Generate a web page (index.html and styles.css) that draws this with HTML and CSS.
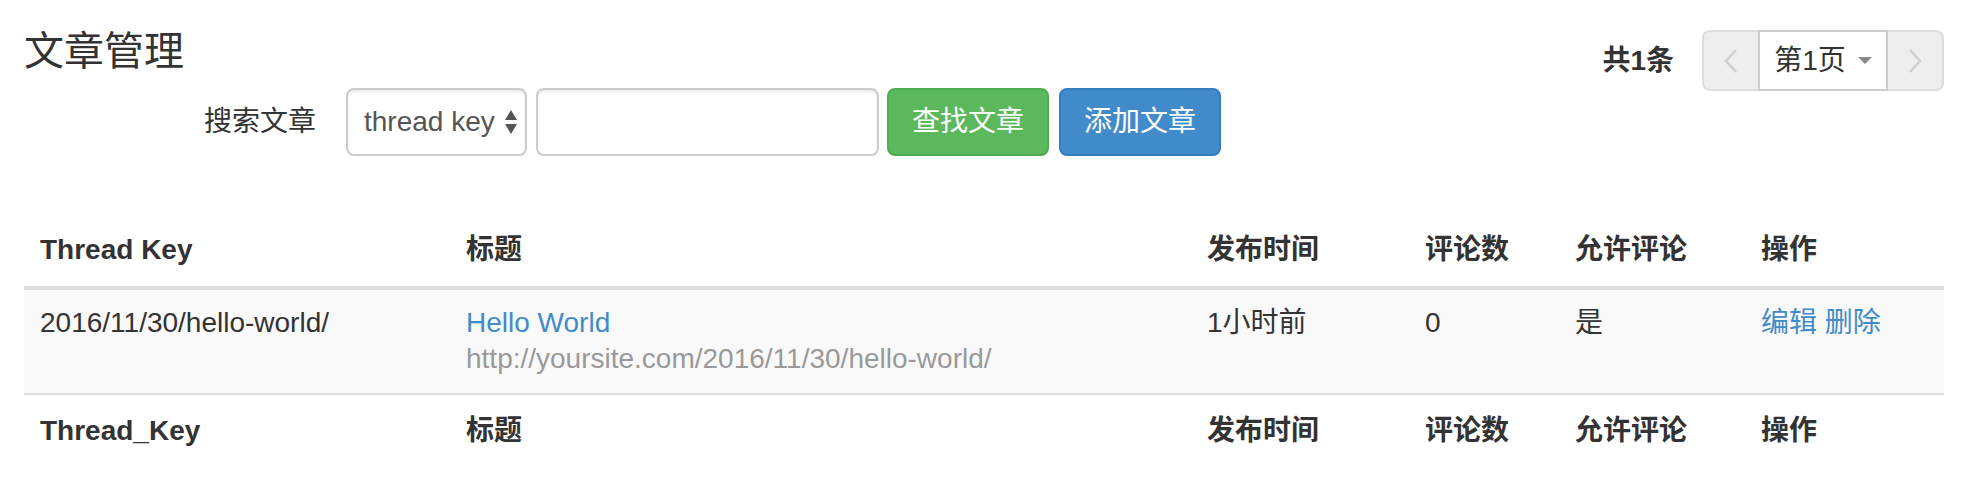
FILE: index.html
```html
<!DOCTYPE html>
<html lang="zh-CN">
<head>
<meta charset="utf-8">
<title>文章管理</title>
<link rel="stylesheet" href="styles.css">
</head>
<body>
<div class="page">
  <div class="topbar">
    <h1 class="title">文章管理</h1>
    <div class="pager">
      <span class="total">共1条</span>
      <div class="pager-group">
        <button class="pg-btn pg-prev" type="button" aria-label="上一页">
          <svg width="16" height="26" viewBox="0 0 16 26"><polyline points="13,2 3,13 13,24" fill="none" stroke="#cfcfcf" stroke-width="2.6"/></svg>
        </button>
        <button class="pg-btn pg-mid" type="button">第1页<span class="caret"></span></button>
        <button class="pg-btn pg-next" type="button" aria-label="下一页">
          <svg width="16" height="26" viewBox="0 0 16 26"><polyline points="3,2 13,13 3,24" fill="none" stroke="#cfcfcf" stroke-width="2.6"/></svg>
        </button>
      </div>
    </div>
  </div>

  <form class="search">
    <label class="search-label">搜索文章</label>
    <div class="select-wrap">
      <select class="select">
        <option>thread key</option>
      </select>
      <svg class="select-arrows" width="12" height="24" viewBox="0 0 12 24"><polygon points="6,0 12,10 0,10" fill="#555"/><polygon points="0,14 12,14 6,24" fill="#555"/></svg>
    </div>
    <input class="input" type="text">
    <button class="btn btn-success" type="button">查找文章</button>
    <button class="btn btn-primary" type="button">添加文章</button>
  </form>

  <table class="table">
    <colgroup>
      <col class="c-key"><col class="c-title"><col class="c-time"><col class="c-count"><col class="c-allow"><col class="c-op">
    </colgroup>
    <thead>
      <tr><th>Thread Key</th><th>标题</th><th>发布时间</th><th>评论数</th><th>允许评论</th><th>操作</th></tr>
    </thead>
    <tbody>
      <tr class="striped">
        <td>2016/11/30/hello-world/</td>
        <td><a class="link title-link" href="#">Hello World</a><span class="url">http://yoursite.com/2016/11/30/hello-world/</span></td>
        <td>1小时前</td>
        <td>0</td>
        <td>是</td>
        <td><a class="link" href="#">编辑</a> <a class="link" href="#">删除</a></td>
      </tr>
    </tbody>
    <tfoot>
      <tr><th>Thread_Key</th><th>标题</th><th>发布时间</th><th>评论数</th><th>允许评论</th><th>操作</th></tr>
    </tfoot>
  </table>
</div>
</body>
</html>
```

FILE: styles.css
```css
* { box-sizing: border-box; }

html, body {
  margin: 0;
  background: #fff;
}

body {
  font-family: "Liberation Sans", Arial, "Noto Sans CJK SC", sans-serif;
  font-size: 28px;
  line-height: 40px;
  color: #333;
}

.page {
  padding: 0 26px 0 24px;
}

.topbar {
  display: flex;
  justify-content: space-between;
  align-items: flex-start;
  height: 88px;
}

.title {
  margin: 29px 0 0;
  font-size: 40px;
  line-height: 44px;
  font-weight: 400;
  color: #333;
}

.pager {
  display: flex;
  align-items: center;
  margin-top: 30px;
}

.total {
  font-weight: bold;
  margin-right: 28px;
}

.pager-group {
  display: flex;
  height: 61px;
}

.pg-btn {
  margin: 0;
  font: inherit;
  color: #333;
  display: flex;
  align-items: center;
  justify-content: center;
  height: 61px;
  padding: 0;
  cursor: pointer;
}

.pg-prev, .pg-next {
  width: 56px;
  background: #eee;
  border: 2px solid #ddd;
}

.pg-prev {
  border-radius: 8px 0 0 8px;
  border-right: 0;
}

.pg-next {
  border-radius: 0 8px 8px 0;
  border-left: 0;
}

.pg-mid {
  width: 130px;
  background: #fff;
  border: 2px solid #ccc;
  line-height: 40px;
  white-space: nowrap;
}

.caret {
  display: inline-block;
  width: 0;
  height: 0;
  margin-left: 12px;
  border-left: 7px solid transparent;
  border-right: 7px solid transparent;
  border-top: 7px solid #888;
}

.search {
  display: flex;
  align-items: center;
  margin: 0;
}

.search-label {
  margin-left: 180px;
  margin-right: 30px;
  font-weight: 400;
  color: #333;
}

.select-wrap {
  position: relative;
  width: 181px;
  height: 68px;
}

.select {
  -webkit-appearance: none;
  appearance: none;
  width: 100%;
  height: 68px;
  margin: 0;
  padding: 0 30px 0 16px;
  border: 2px solid #ccc;
  border-radius: 8px;
  background: #fff;
  font: inherit;
  color: #555;
  box-shadow: inset 0 2px 2px rgba(0, 0, 0, 0.075);
}

.select-arrows {
  position: absolute;
  right: 10px;
  top: 22px;
  pointer-events: none;
}

.input {
  width: 343px;
  height: 68px;
  margin: 0 0 0 9px;
  padding: 0 16px;
  border: 2px solid #ccc;
  border-radius: 8px;
  font: inherit;
  color: #555;
  box-shadow: inset 0 2px 2px rgba(0, 0, 0, 0.075);
}

.btn {
  width: 162px;
  height: 68px;
  margin: 0 0 0 8px;
  padding: 0;
  border: 2px solid transparent;
  border-radius: 8px;
  font: inherit;
  color: #fff;
  white-space: nowrap;
  cursor: pointer;
}

.btn-primary {
  margin-left: 10px;
  background: #428bca;
  border-color: #357ebd;
}

.btn-success {
  background: #5cb85c;
  border-color: #4cae4c;
}

.table {
  width: 1920px;
  margin-top: 58px;
  border-collapse: collapse;
  border-spacing: 0;
  table-layout: fixed;
}

.c-key { width: 426px; }
.c-title { width: 741px; }
.c-time { width: 218px; }
.c-count { width: 150px; }
.c-allow { width: 186px; }
.c-op { width: 199px; }

.table th,
.table td {
  padding: 16px;
  text-align: left;
  line-height: 40px;
}

.table thead th {
  font-weight: bold;
  vertical-align: bottom;
  border-bottom: 4px solid #ddd;
}

.table tbody td {
  vertical-align: top;
  border-top: 4px solid #ddd;
  line-height: 36px;
  padding-top: 15px;
}

.table tfoot th {
  font-weight: bold;
  vertical-align: top;
  border-top: 2px solid #ddd;
}

.striped td {
  background: #f9f9f9;
}

.link {
  color: #428bca;
  text-decoration: none;
}

.title-link {
  display: block;
}

.url {
  display: block;
  line-height: 36px;
  color: #999;
}
```
